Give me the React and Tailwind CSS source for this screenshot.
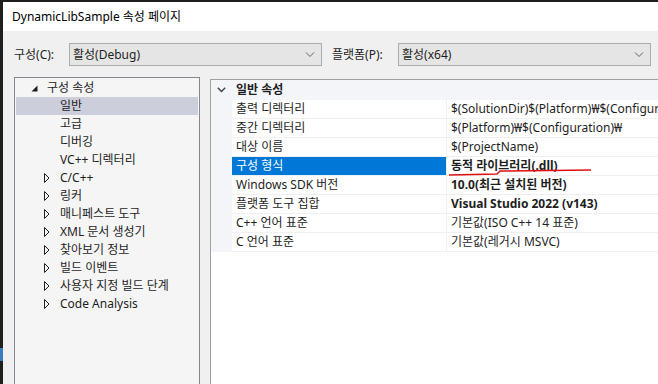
import React from 'react';

const font = "font-['Segoe_UI','Noto_Sans','Noto_Sans_CJK_KR',sans-serif]";

const treeItems = [
  { label: '일반', selected: true },
  { label: '고급' },
  { label: '디버깅' },
  { label: 'VC++ 디렉터리' },
  { label: 'C/C++', arrow: true },
  { label: '링커', arrow: true },
  { label: '매니페스트 도구', arrow: true },
  { label: 'XML 문서 생성기', arrow: true },
  { label: '찾아보기 정보', arrow: true },
  { label: '빌드 이벤트', arrow: true },
  { label: '사용자 지정 빌드 단계', arrow: true },
  { label: 'Code Analysis', arrow: true },
];

const props = [
  { name: '출력 디렉터리', value: '$(SolutionDir)$(Platform)₩$(Configuration)₩' },
  { name: '중간 디렉터리', value: '$(Platform)₩$(Configuration)₩' },
  { name: '대상 이름', value: '$(ProjectName)' },
  { name: '구성 형식', value: '동적 라이브러리(.dll)', bold: true, selected: true },
  { name: 'Windows SDK 버전', value: '10.0(최근 설치된 버전)', bold: true },
  { name: '플랫폼 도구 집합', value: 'Visual Studio 2022 (v143)', bold: true },
  { name: 'C++ 언어 표준', value: '기본값(ISO C++ 14 표준)' },
  { name: 'C 언어 표준', value: '기본값(레거시 MSVC)' },
];

function Chevron() {
  return (
    <svg width="10" height="6" viewBox="0 0 10 6" fill="none" stroke="#606060" strokeWidth="1">
      <path d="M1 0.5 L5 4.5 L9 0.5" />
    </svg>
  );
}

function Combo({ label, labelW, value }) {
  return (
    <div className="flex items-center">
      <span className="text-[12px] leading-none text-[#1e1e1e]" style={{ width: labelW }}>{label}</span>
      <div className="w-[253px] h-[23px] border border-[#adadad] bg-[#e5e5e5] flex items-center justify-between pl-[3px] pr-[6px]">
        <span className="text-[12px] leading-none text-[#1e1e1e]">{value}</span>
        <Chevron />
      </div>
    </div>
  );
}

export default function App() {
  return (
    <div className={`w-[658px] h-[384px] overflow-hidden flex flex-col bg-[#1f1f1f] ${font}`}>
      <div className="h-[2px] shrink-0" />
      <div className="flex flex-1 min-h-0">
        {/* dark strip of the editor behind */}
        <div className="w-[3px] shrink-0 flex flex-col">
          <div className="h-[346px]" />
          <div className="h-[13px] bg-[#3a7bbf]" />
        </div>

        <div className="flex-1 flex flex-col min-w-0">
          {/* title bar */}
          <div className="h-[29px] shrink-0 bg-white flex items-center pl-[9px]">
            <span className="text-[12px] leading-none text-black">DynamicLibSample 속성 페이지</span>
          </div>

          {/* body */}
          <div className="flex-1 bg-[#f0f0f0] flex flex-col min-h-0">
            <div className="flex items-center gap-[10px] pl-[11px] pt-[12px] h-[35px] shrink-0">
              <Combo label="구성(C):" labelW={55} value="활성(Debug)" />
              <Combo label="플랫폼(P):" labelW={66} value="활성(x64)" />
            </div>

            <div className="flex flex-1 min-h-0 mt-[11px] pl-[11px] gap-[10px]">
              {/* tree */}
              <div className="w-[186px] shrink-0 border border-[#828790] border-b-0 bg-[#f5f5f5] pt-[1px]">
                <div className="h-[18px] flex items-center text-[12px] leading-none text-[#1e1e1e]">
                  <div className="w-[25px] flex justify-end pr-[2px]">
                    <svg width="7" height="7" viewBox="0 0 7 7">
                      <polygon points="6.5,0.5 6.5,6.5 0.5,6.5" fill="#1e1e1e" />
                    </svg>
                  </div>
                  <span className="ml-[7px]">구성 속성</span>
                </div>
                {treeItems.map((it) => (
                  <div
                    key={it.label}
                    className={`h-[18px] mx-[1px] flex items-center text-[12px] leading-none text-[#1e1e1e] ${it.selected ? 'bg-[#cccedb]' : ''}`}
                  >
                    <div className="w-[43px] flex justify-end pr-[9px]">
                      {it.arrow && (
                        <svg width="6" height="10" viewBox="0 0 6 10">
                          <polygon points="0.5,0.5 5,5 0.5,9.5" fill="none" stroke="#1e1e1e" strokeWidth="1" />
                        </svg>
                      )}
                    </div>
                    <span className="ml-[1px]">{it.label}</span>
                  </div>
                ))}
              </div>

              {/* property grid */}
              <div className="flex-1 min-w-0 mt-[2px] border-l border-t border-[#a0a0a0] bg-white relative">
                <div className="h-[20px] bg-[#f3f5f8] flex items-center">
                  <div className="w-[21px] flex justify-center">
                    <svg width="9" height="6" viewBox="0 0 9 6" fill="none" stroke="#404040" strokeWidth="1.4">
                      <path d="M0.8 0.8 L4.5 4.5 L8.2 0.8" />
                    </svg>
                  </div>
                  <span className="ml-[4px] text-[12px] leading-none font-bold text-[#1e1e1e]">일반 속성</span>
                </div>
                {props.map((p) => (
                  <div key={p.name} className="flex h-[19px]">
                    <div className="w-[21px] shrink-0 bg-[#f3f5f8]" />
                    <div
                      className={`w-[214px] shrink-0 flex items-center pl-[4px] border-b border-[#f0f0f0] text-[12px] leading-none whitespace-nowrap ${p.selected ? 'bg-[#0078d7] text-white border-[#0078d7]' : 'text-[#1e1e1e]'}`}
                    >
                      {p.name}
                    </div>
                    <div
                      className={`flex-1 min-w-0 flex items-center pl-[4px] border-l border-b border-[#f0f0f0] text-[12px] leading-none text-[#1e1e1e] whitespace-nowrap overflow-hidden ${p.bold ? 'font-bold' : ''}`}
                    >
                      {p.value}
                    </div>
                  </div>
                ))}
                {/* red annotation underline */}
                <svg className="absolute left-[236px] top-[89px]" width="150" height="8" viewBox="0 0 150 8" fill="none">
                  <path d="M2 6 L50 5 L53 2 L144 1" stroke="#e01010" strokeWidth="1.5" />
                </svg>
              </div>
            </div>
          </div>
        </div>
      </div>
    </div>
  );
}
